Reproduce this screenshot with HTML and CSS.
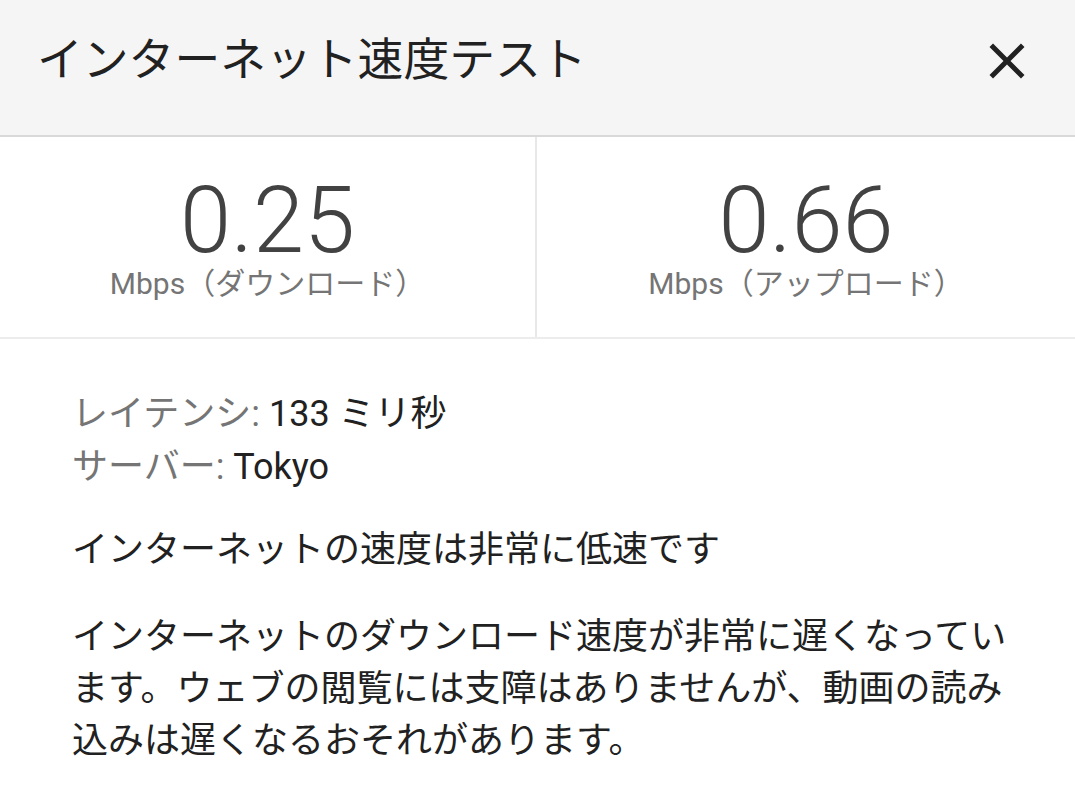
FILE: index.html
```html
<!DOCTYPE html>
<html lang="ja">
<head>
<meta charset="utf-8">
<title>インターネット速度テスト</title>
<link rel="stylesheet" href="styles.css">
</head>
<body>
<div class="dialog">
  <header class="header">
    <h1 class="title">インターネット速度テスト</h1>
    <button class="close" aria-label="閉じる">
      <svg width="60" height="60" viewBox="0 0 24 24"><path fill="#212121" d="M19 6.41L17.59 5 12 10.59 6.41 5 5 6.41 10.59 12 5 17.59 6.41 19 12 13.41 17.59 19 19 17.59 13.41 12z"/></svg>
    </button>
  </header>
  <section class="stats">
    <div class="stat">
      <div class="value">0.25</div>
      <div class="unit">Mbps（ダウンロード）</div>
    </div>
    <div class="stat stat-right">
      <div class="value">0.66</div>
      <div class="unit">Mbps（アップロード）</div>
    </div>
  </section>
  <section class="details">
    <div class="meta">
      <div class="row"><span class="key">レイテンシ:</span> 133 ミリ秒</div>
      <div class="row"><span class="key">サーバー:</span> Tokyo</div>
    </div>
    <p class="summary">インターネットの速度は非常に低速です</p>
    <p class="desc">インターネットのダウンロード速度が非常に遅くなっています。ウェブの閲覧には支障はありませんが、動画の読み込みは遅くなるおそれがあります。</p>
  </section>
</div>
</body>
</html>
```

FILE: styles.css
```css
* { box-sizing: border-box; }
html, body {
  margin: 0;
  padding: 0;
  background: #ffffff;
}
body {
  font-family: Roboto, "Noto Sans CJK JP", sans-serif;
  color: #212121;
  width: 1075px;
  height: 799px;
  overflow: hidden;
}
.header {
  height: 137px;
  background: #f5f5f5;
  border-bottom: 2px solid #d9d9d9;
  display: flex;
  justify-content: space-between;
  align-items: flex-start;
  padding: 0 38px 0 37px;
}
.title {
  margin: 31px 0 0 0;
  font-size: 45.8px;
  line-height: 60px;
  font-weight: 400;
  color: #212121;
}
.close {
  margin-top: 31px;
  width: 60px;
  height: 60px;
  padding: 0;
  border: none;
  background: transparent;
  display: block;
}
.close svg { display: block; }
.stats {
  display: flex;
  height: 202px;
  border-bottom: 2px solid #ececec;
}
.stat {
  width: 537px;
  display: flex;
  flex-direction: column;
  align-items: center;
  padding-top: 39px;
  border-right: 2px solid #e8e8e8;
}
.stat-right {
  flex: 1;
  border-right: none;
}
.value {
  font-size: 92px;
  font-weight: 300;
  line-height: 90px;
  color: #424242;
}
.unit {
  font-size: 30px;
  line-height: 36px;
  color: #757575;
}
.details {
  padding: 49px 50px 0 72px;
  font-size: 36px;
  line-height: 53px;
}
.meta .row { color: #212121; }
.meta .key { color: #757575; }
.summary {
  margin: 30px 0 0 0;
}
.desc {
  margin: 34px 0 0 0;
  line-height: 52px;
}
```
